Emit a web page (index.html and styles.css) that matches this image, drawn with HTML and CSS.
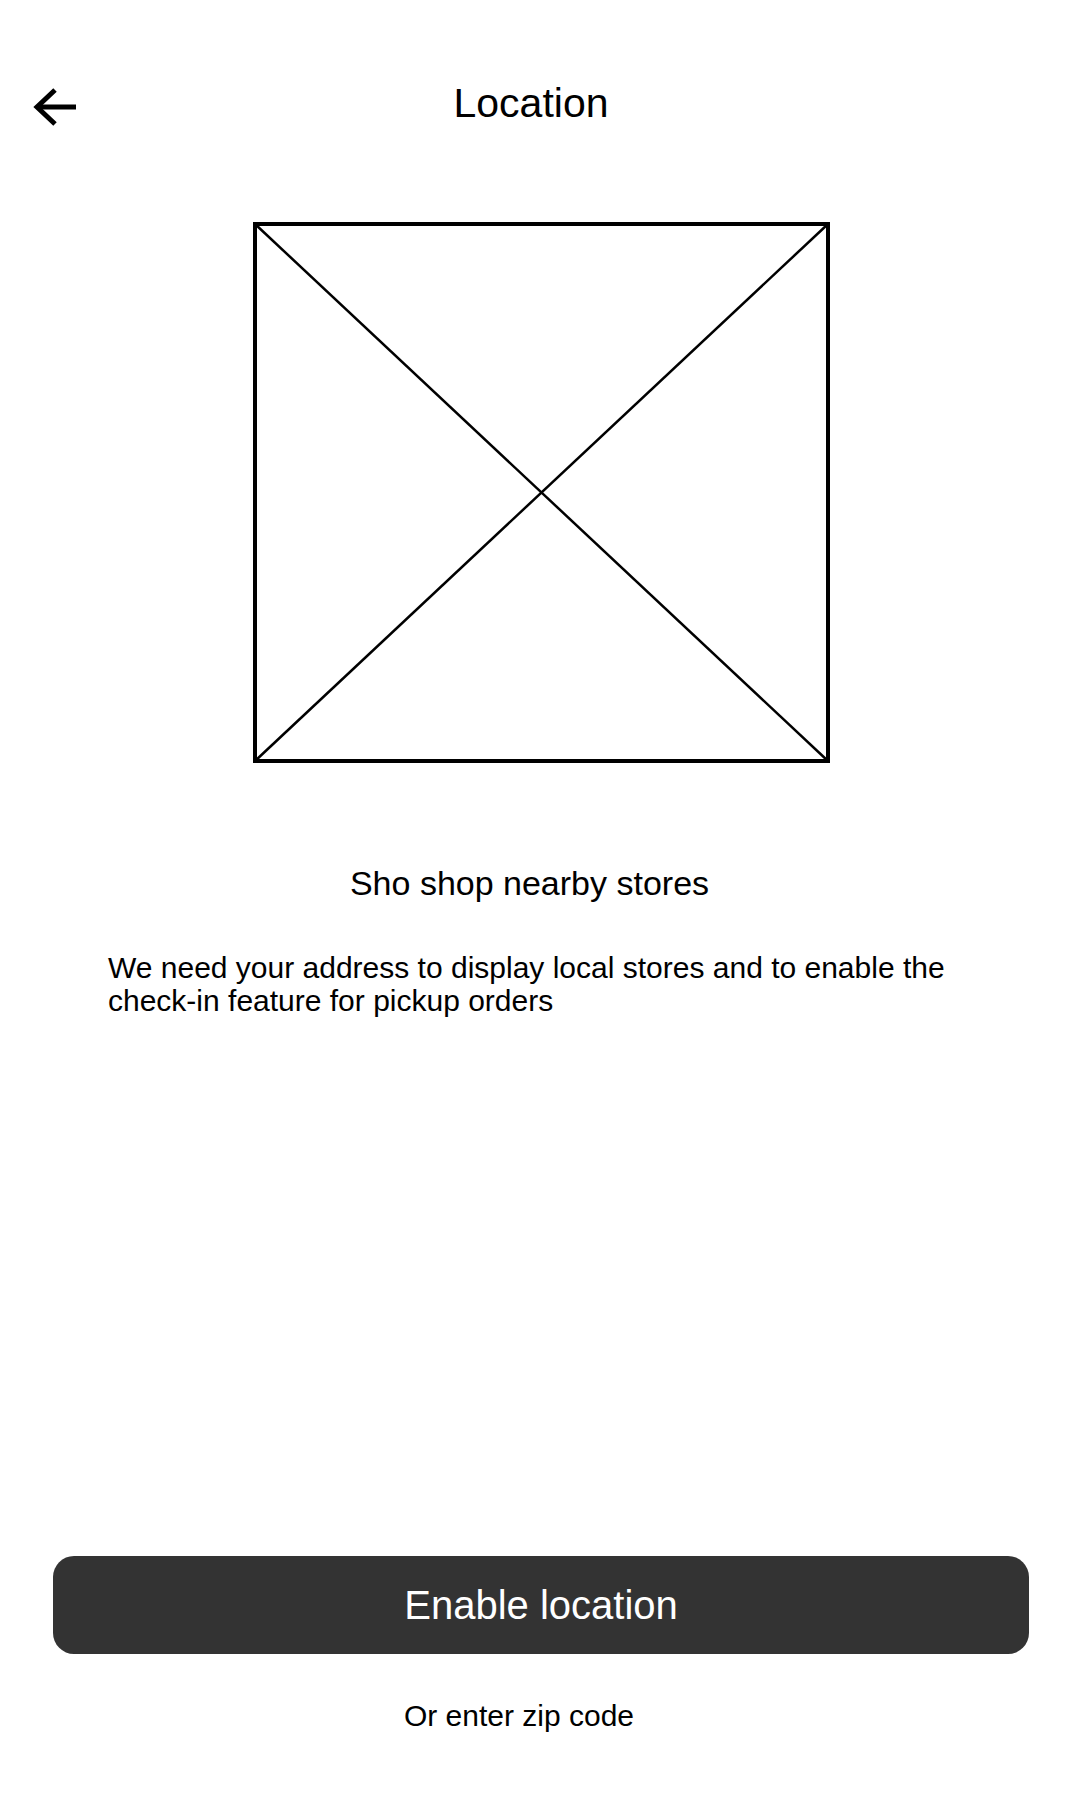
FILE: index.html
```html
<!DOCTYPE html>
<html lang="en">
<head>
<meta charset="utf-8">
<title>Location</title>
<link rel="stylesheet" href="styles.css">
</head>
<body>
<div class="screen">
  <header class="header">
    <button class="back" aria-label="Back">
      <svg width="44" height="40" viewBox="0 0 44 40" fill="none" stroke="#000" stroke-width="5" stroke-linejoin="miter" stroke-miterlimit="10">
        <path d="M43 20H5"/>
        <path d="M22 3L4 20L22 37"/>
      </svg>
    </button>
    <h1 class="title">Location</h1>
  </header>

  <div class="placeholder">
    <svg width="577" height="541" viewBox="0 0 577 541" fill="none" stroke="#000">
      <rect x="2" y="2" width="573" height="537" stroke-width="4"/>
      <line x1="2" y1="2" x2="575" y2="539" stroke-width="2.5"/>
      <line x1="575" y1="2" x2="2" y2="539" stroke-width="2.5"/>
    </svg>
  </div>

  <h2 class="subtitle">Sho shop nearby stores</h2>
  <p class="desc">We need your address to display local stores and to enable the <span class="nowrap">check-in</span> feature for pickup orders</p>

  <div class="footer">
    <button class="primary">Enable location</button>
    <a class="zip">Or enter zip code</a>
  </div>
</div>
</body>
</html>
```
FILE: styles.css
```css
* { box-sizing: border-box; }
html, body { margin: 0; padding: 0; background: #fff; }
body { font-family: "Liberation Sans", Arial, sans-serif; color: #000; }

.screen {
  width: 1080px;
  height: 1800px;
  display: flex;
  flex-direction: column;
}

.header {
  display: flex;
  align-items: flex-start;
  padding-top: 79px;
}
.back {
  margin: 8px 0 0 33px;
  padding: 0;
  border: 0;
  background: none;
  width: 44px;
  height: 40px;
  display: block;
}
.back svg { display: block; }
.title {
  flex: 1;
  margin: 0 94px 0 -1px;
  font-size: 41px;
  line-height: 48px;
  font-weight: 400;
  text-align: center;
}

.placeholder {
  margin-top: 95px;
  display: flex;
  justify-content: center;
  padding-left: 3px;
}
.placeholder svg { display: block; }

.subtitle {
  margin: 101px 0 0;
  font-size: 34px;
  line-height: 38px;
  font-weight: 400;
  text-align: center;
  padding-right: 21px;
}

.desc {
  margin: 49px 0 0;
  padding: 0 92px 0 108px;
  font-size: 30px;
  line-height: 33px;
}
.nowrap { white-space: nowrap; }

.footer {
  margin-top: auto;
  padding-bottom: 67px;
  display: flex;
  flex-direction: column;
}
.primary {
  margin: 0 51px 0 53px;
  height: 98px;
  border: 0;
  border-radius: 21px;
  background: #333333;
  color: #fff;
  font-family: "Liberation Sans", Arial, sans-serif;
  font-size: 40px;
  line-height: 46px;
  padding: 0;
}
.zip {
  margin-top: 44px;
  font-size: 30px;
  line-height: 35px;
  text-align: center;
  padding-right: 42px;
  color: #000;
}
```
